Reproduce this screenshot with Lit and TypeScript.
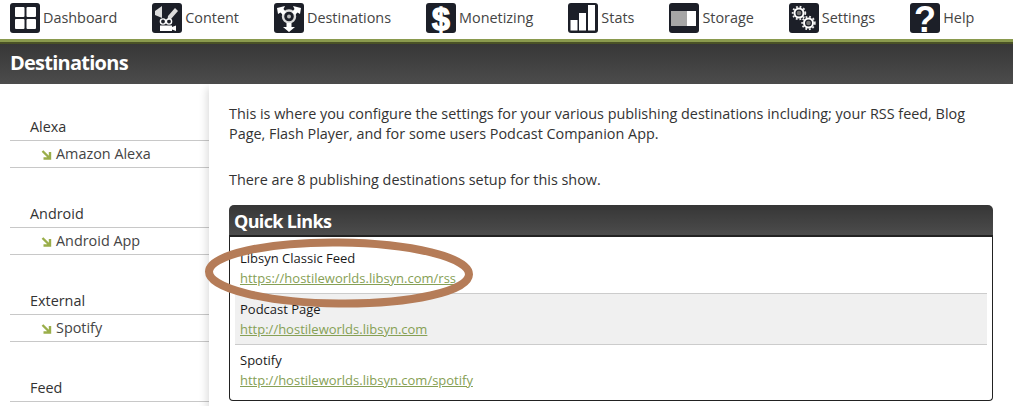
import { LitElement, html, css, svg } from 'lit';
import { customElement } from 'lit/decorators.js';

const gear = (cx: number, cy: number, r: number) => svg`
  <circle cx=${cx} cy=${cy} r=${r} fill="none" stroke="#fff" stroke-width="2"/>
  <circle cx=${cx} cy=${cy} r=${r + 1.8} fill="none" stroke="#eee" stroke-width="1.8" stroke-dasharray="1.8 1.9"/>
  <circle cx=${cx} cy=${cy} r=${r - 2.2} fill="#777"/>
`;

const ICONS: Record<string, unknown> = {
  dashboard: svg`
    <rect x="5" y="4" width="9.5" height="10" rx="1" fill="#fff"/>
    <rect x="16.5" y="4" width="9.5" height="10" rx="1" fill="#fff"/>
    <rect x="5" y="16" width="9.5" height="10" rx="1" fill="#fff"/>
    <rect x="16.5" y="16" width="9.5" height="10" rx="1" fill="#fff"/>`,
  content: svg`
    <path d="M3 8 L10 3 V15 L3 12 Z" fill="#ddd"/>
    <path d="M16 13 L23 5 L26 8 L19 16 L15.5 17 Z" fill="#ddd"/>
    <circle cx="11" cy="18.5" r="2.6" fill="none" stroke="#fff" stroke-width="1.4"/>
    <circle cx="17" cy="18.5" r="2.6" fill="none" stroke="#fff" stroke-width="1.4"/>
    <path d="M8 22.5 H20 V24 L24 22.5 V28 L20 26.5 V28 H8 Z" fill="#fff"/>`,
  destinations: svg`
    <circle cx="15" cy="13.5" r="6" fill="none" stroke="#ddd" stroke-width="2.4"/>
    <circle cx="15" cy="13.5" r="2" fill="#bbb"/>
    <path d="M3 5 L11 3 L9.5 6 L12 9 L9 12 L6.5 9.5 L4 11 Z" fill="#fff"/>
    <path d="M27 5 L19 3 L20.5 6 L18 9 L21 12 L23.5 9.5 L26 11 Z" fill="#fff"/>
    <path d="M12.5 20 H17.5 V24 H21 L15 29 L9 24 H12.5 Z" fill="#fff"/>`,
  monetizing: svg`<text x="15" y="26.5" text-anchor="middle" font-family="'Liberation Sans', sans-serif" font-weight="700" font-size="32" fill="#fff" stroke="#fff" stroke-width="1.4">$</text>`,
  stats: svg`
    <rect x="2.5" y="17" width="7" height="10.5" fill="#fff"/>
    <rect x="11" y="10" width="7" height="17.5" fill="#fff"/>
    <rect x="20" y="2" width="7" height="25.5" fill="#fff"/>`,
  storage: svg`
    <rect x="2" y="8" width="16" height="15" fill="#a6a6a6"/>
    <rect x="18" y="8" width="9" height="15" fill="#fff"/>`,
  settings: svg`${gear(10, 10, 4.5)}${gear(19.5, 20, 4.5)}`,
  help: svg`<text x="15" y="28.5" text-anchor="middle" font-family="'Liberation Sans', sans-serif" font-weight="700" font-size="36" fill="#fff">?</text>`,
};

const NAV = [
  ['dashboard', 'Dashboard'],
  ['content', 'Content'],
  ['destinations', 'Destinations'],
  ['monetizing', 'Monetizing'],
  ['stats', 'Stats'],
  ['storage', 'Storage'],
  ['settings', 'Settings'],
  ['help', 'Help'],
];

const SIDEBAR = [
  ['Alexa', 'Amazon Alexa'],
  ['Android', 'Android App'],
  ['External', 'Spotify'],
  ['Feed', ''],
];

const LINKS = [
  ['Libsyn Classic Feed', 'https://hostileworlds.libsyn.com/rss'],
  ['Podcast Page', 'http://hostileworlds.libsyn.com'],
  ['Spotify', 'http://hostileworlds.libsyn.com/spotify'],
];

@customElement('app-root')
export class AppRoot extends LitElement {
  static styles = css`
    :host {
      display: block;
      position: relative;
      height: 406px;
      overflow: hidden;
      background: #fff;
      color: #333;
      font-family: 'Open Sans', sans-serif;
      font-size: 14.4px;
    }

    nav {
      display: flex;
      gap: 35px;
      height: 39px;
      padding: 3px 0 0 10px;
      box-sizing: border-box;
    }

    .nav-item {
      display: flex;
      align-items: center;
      gap: 3px;
      height: 30px;
      color: #444;
    }

    .nav-item svg { display: block; width: 30px; height: 30px; overflow: visible; }

    .nav-item span { padding-bottom: 1px; }

    .title-bar {
      height: 42px;
      border-top: 3px solid #8a9a4e;
      box-shadow: inset 0 2px 0 #4a5226;
      padding-left: 10px;
      background: linear-gradient(#363636, #4c4c4c);
      color: #fff;
      font-size: 20px;
      font-weight: 700;
      line-height: 42px;
      letter-spacing: -0.75px;
    }

    .page {
      display: grid;
      grid-template-columns: 209px 1fr;
    }

    aside {
      padding: 30px 0 0 10px;
    }

    .group { height: 87px; }

    .group-name {
      height: 26px;
      padding-left: 20px;
      border-bottom: 1px solid #c8c8c8;
      line-height: 26px;
      color: #333;
    }

    .group-item {
      display: flex;
      align-items: center;
      gap: 4px;
      height: 24px;
      padding: 0 0 2px 31px;
      border-bottom: 1px solid #c8c8c8;
      color: #444;
    }

    .group-item svg { width: 11px; height: 11px; margin-top: 2px; }

    main {
      height: 322px;
      padding: 20px 20px 0 20px;
      box-shadow: -6px 0 8px -4px rgba(0, 0, 0, 0.14);
    }

    p {
      margin: 0;
      line-height: 20px;
      color: #333;
    }

    p + p { margin-top: 26px; }

    .box { margin-top: 15px; }

    .box-head {
      height: 30px;
      padding-left: 5px;
      border-radius: 5px 5px 0 0;
      border-bottom: 2px solid #222;
      background: linear-gradient(#363636, #4c4c4c);
      color: #fff;
      font-size: 18px;
      font-weight: 700;
      line-height: 32px;
      letter-spacing: -0.65px;
    }

    .box-body {
      padding: 5px 5px 4px 5px;
      border: 1px solid #222;
      border-top: 0;
      border-radius: 0 0 4px 4px;
    }

    .row {
      height: 51px;
      padding: 5px 0 0 5px;
      box-sizing: border-box;
      font-size: 13px;
      line-height: 20px;
      color: #1a1a1a;
    }

    .row:first-child { padding-top: 6px; }

    .row.alt {
      background: #f0f0f0;
      border-top: 1px solid #ccc;
      border-bottom: 1px solid #ccc;
      height: 52px;
    }

    .row a {
      display: block;
      color: #86a055;
      text-decoration: underline;
    }

    .circle {
      position: absolute;
      left: 200px;
      top: 234px;
      width: 280px;
      height: 80px;
      pointer-events: none;
    }
  `;

  render() {
    return html`
      <nav>
        ${NAV.map(([icon, label]) => html`
          <div class="nav-item">
            <svg viewBox="0 0 30 30">
              <rect width="30" height="30" rx="3" fill="#1c1f28"/>
              ${ICONS[icon]}
            </svg>
            <span>${label}</span>
          </div>
        `)}
      </nav>
      <div class="title-bar">Destinations</div>
      <div class="page">
        <aside>
          ${SIDEBAR.map(([name, item]) => html`
            <div class="group">
              <div class="group-name">${name}</div>
              ${item ? html`
                <div class="group-item">
                  <svg viewBox="0 0 11 11"><path d="M1.5 2 L8 8.5 M9 3 V9.5 H2.5" fill="none" stroke="#9aae4a" stroke-width="2.4"/></svg>
                  ${item}
                </div>
              ` : ''}
            </div>
          `)}
        </aside>
        <main>
          <p>This is where you configure the settings for your various publishing destinations including; your RSS feed, Blog Page, Flash Player, and for some users Podcast Companion App.</p>
          <p>There are 8 publishing destinations setup for this show.</p>
          <div class="box">
            <div class="box-head">Quick Links</div>
            <div class="box-body">
              ${LINKS.map(([name, url], i) => html`
                <div class="row ${i === 1 ? 'alt' : ''}">
                  ${name}
                  <a href="#">${url}</a>
                </div>
              `)}
            </div>
          </div>
        </main>
      </div>
      <svg class="circle" viewBox="0 0 280 80">
        <ellipse cx="139" cy="39" rx="130" ry="30.5" transform="rotate(0.6 139 39)" fill="none" stroke="#b57c58" stroke-width="8"/>
      </svg>
    `;
  }
}

declare global {
  interface HTMLElementTagNameMap { 'app-root': AppRoot; }
}
